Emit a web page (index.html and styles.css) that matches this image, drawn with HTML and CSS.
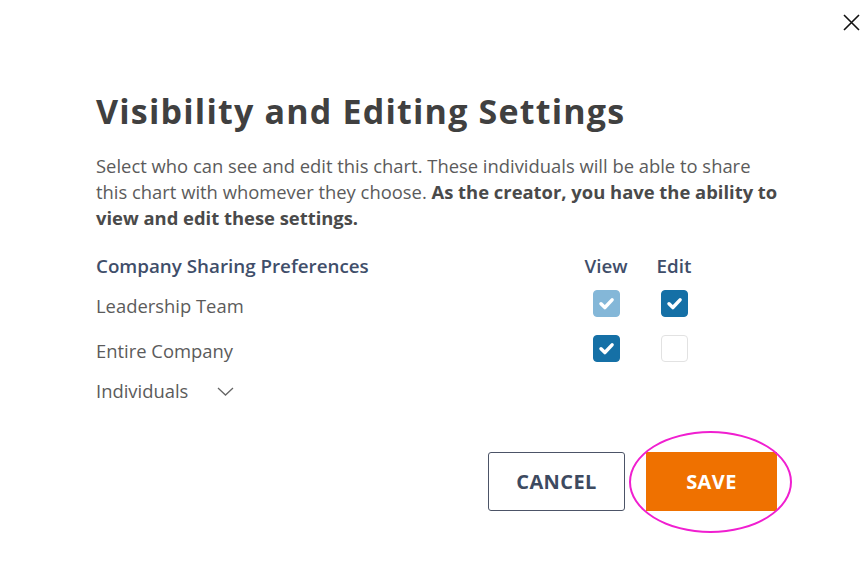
FILE: index.html
```html
<!doctype html>
<html>
<head>
    <meta charset="utf-8">
    <title>Visibility and Editing Settings</title>
    <link rel="stylesheet" href="styles.css">
</head>
<body>
    <div class="dialog">
        <div class="topbar">
            <button class="close" aria-label="Close">
                <svg width="17" height="17" viewBox="0 0 17 17"><path d="M1 1L16 16M16 1L1 16" stroke="#111" stroke-width="1.6" fill="none"/></svg>
            </button>
        </div>

        <h1 class="title">Visibility and Editing Settings</h1>
        <p class="intro">Select who can see and edit this chart. These individuals will be able to share this chart with whomever they choose. <b>As the creator, you have the ability to view and edit these settings.</b></p>

        <div class="prefs">
            <div class="head">Company Sharing Preferences</div>
            <div class="head col">View</div>
            <div class="head col">Edit</div>

            <div class="label">Leadership Team</div>
            <div class="col"><span class="box light"><svg viewBox="0 0 28 28"><path d="M8.3 14.3l4 3.9 7.5-8"/></svg></span></div>
            <div class="col"><span class="box on"><svg viewBox="0 0 28 28"><path d="M8.3 14.3l4 3.9 7.5-8"/></svg></span></div>

            <div class="label">Entire Company</div>
            <div class="col"><span class="box on"><svg viewBox="0 0 28 28"><path d="M8.3 14.3l4 3.9 7.5-8"/></svg></span></div>
            <div class="col"><span class="box"></span></div>

            <div class="label individuals">Individuals
                <svg class="chev" width="17" height="9" viewBox="0 0 17 9"><path d="M1 1l7.5 7 7.5-7" stroke="#666" stroke-width="1.3" fill="none"/></svg>
            </div>
        </div>

        <div class="actions">
            <button class="btn cancel">CANCEL</button>
            <div class="save-wrap">
                <button class="btn save">SAVE</button>
                <span class="ring"></span>
            </div>
        </div>
    </div>
</body>
</html>
```

FILE: styles.css
```css
*{margin:0; padding:0; box-sizing:border-box;}
body{background:#fff; font-family:"Open Sans", "Liberation Sans", sans-serif;}

.dialog{
    width:868px;
    height:586px;
    padding:0 91px 0 96px;
}
.topbar{
    display:flex;
    justify-content:flex-end;
    margin-right:-83px;
    padding-top:14px;
    height:40px;
}
.close{
    border:0;
    background:none;
    width:17px;
    height:17px;
}
.close svg{display:block;}

.title{
    margin-top:51px;
    font-family:"Open Sans", sans-serif;
    font-weight:700;
    font-size:34px;
    line-height:40px;
    color:#404040;
    letter-spacing:1.2px;
}
.intro{
    margin-top:22px;
    width:686px;
    font-size:18.4px;
    line-height:26px;
    color:#5b5b5b;
}
.intro b{color:#4a4a4a; font-weight:700;}

.prefs{
    display:grid;
    grid-template-columns:476px 68px 68px;
    grid-template-rows:35px 45px 45px 35px;
    margin-top:17px;
    align-items:center;
}
.prefs .head{
    font-size:18.8px;
    font-weight:600;
    color:#3f4e6a;
}
.prefs .col{
    display:flex;
    justify-content:center;
}
.label{
    font-size:18.4px;
    color:#5b5b5b;
}
.individuals{
    display:flex;
    align-items:center;
}
.chev{margin-left:29px; margin-top:2px;}

.box{
    display:block;
    width:27px;
    height:27px;
    margin-top:-4px;
    border-radius:4px;
    border:1px solid #e2e2e2;
    background:#fff;
}
.box.on{background:#1570a6; border-color:#1570a6;}
.box.light{background:#84b7d8; border-color:#84b7d8;}
.box svg{display:block; width:27px; height:27px; margin:-1px;}
.box svg path{stroke:#fff; stroke-width:3.6; fill:none; stroke-linecap:round; stroke-linejoin:round;}

.actions{
    display:flex;
    justify-content:flex-end;
    gap:21px;
    margin-top:44px;
}
.btn{
    height:59px;
    font-family:"Open Sans", sans-serif;
    font-weight:700;
    font-size:20px;
    letter-spacing:0.4px;
}
.cancel{
    width:137px;
    background:#fff;
    border:1px solid #4c5467;
    border-radius:3px;
    color:#3d4a60;
}
.save-wrap{position:relative;}
.save{
    width:131px;
    background:#ef7100;
    border:0;
    color:#fff;
}
.ring{
    position:absolute;
    left:-17px;
    top:-21px;
    width:163px;
    height:102px;
    border:2px solid #f01fd0;
    border-radius:50%;
}
```
